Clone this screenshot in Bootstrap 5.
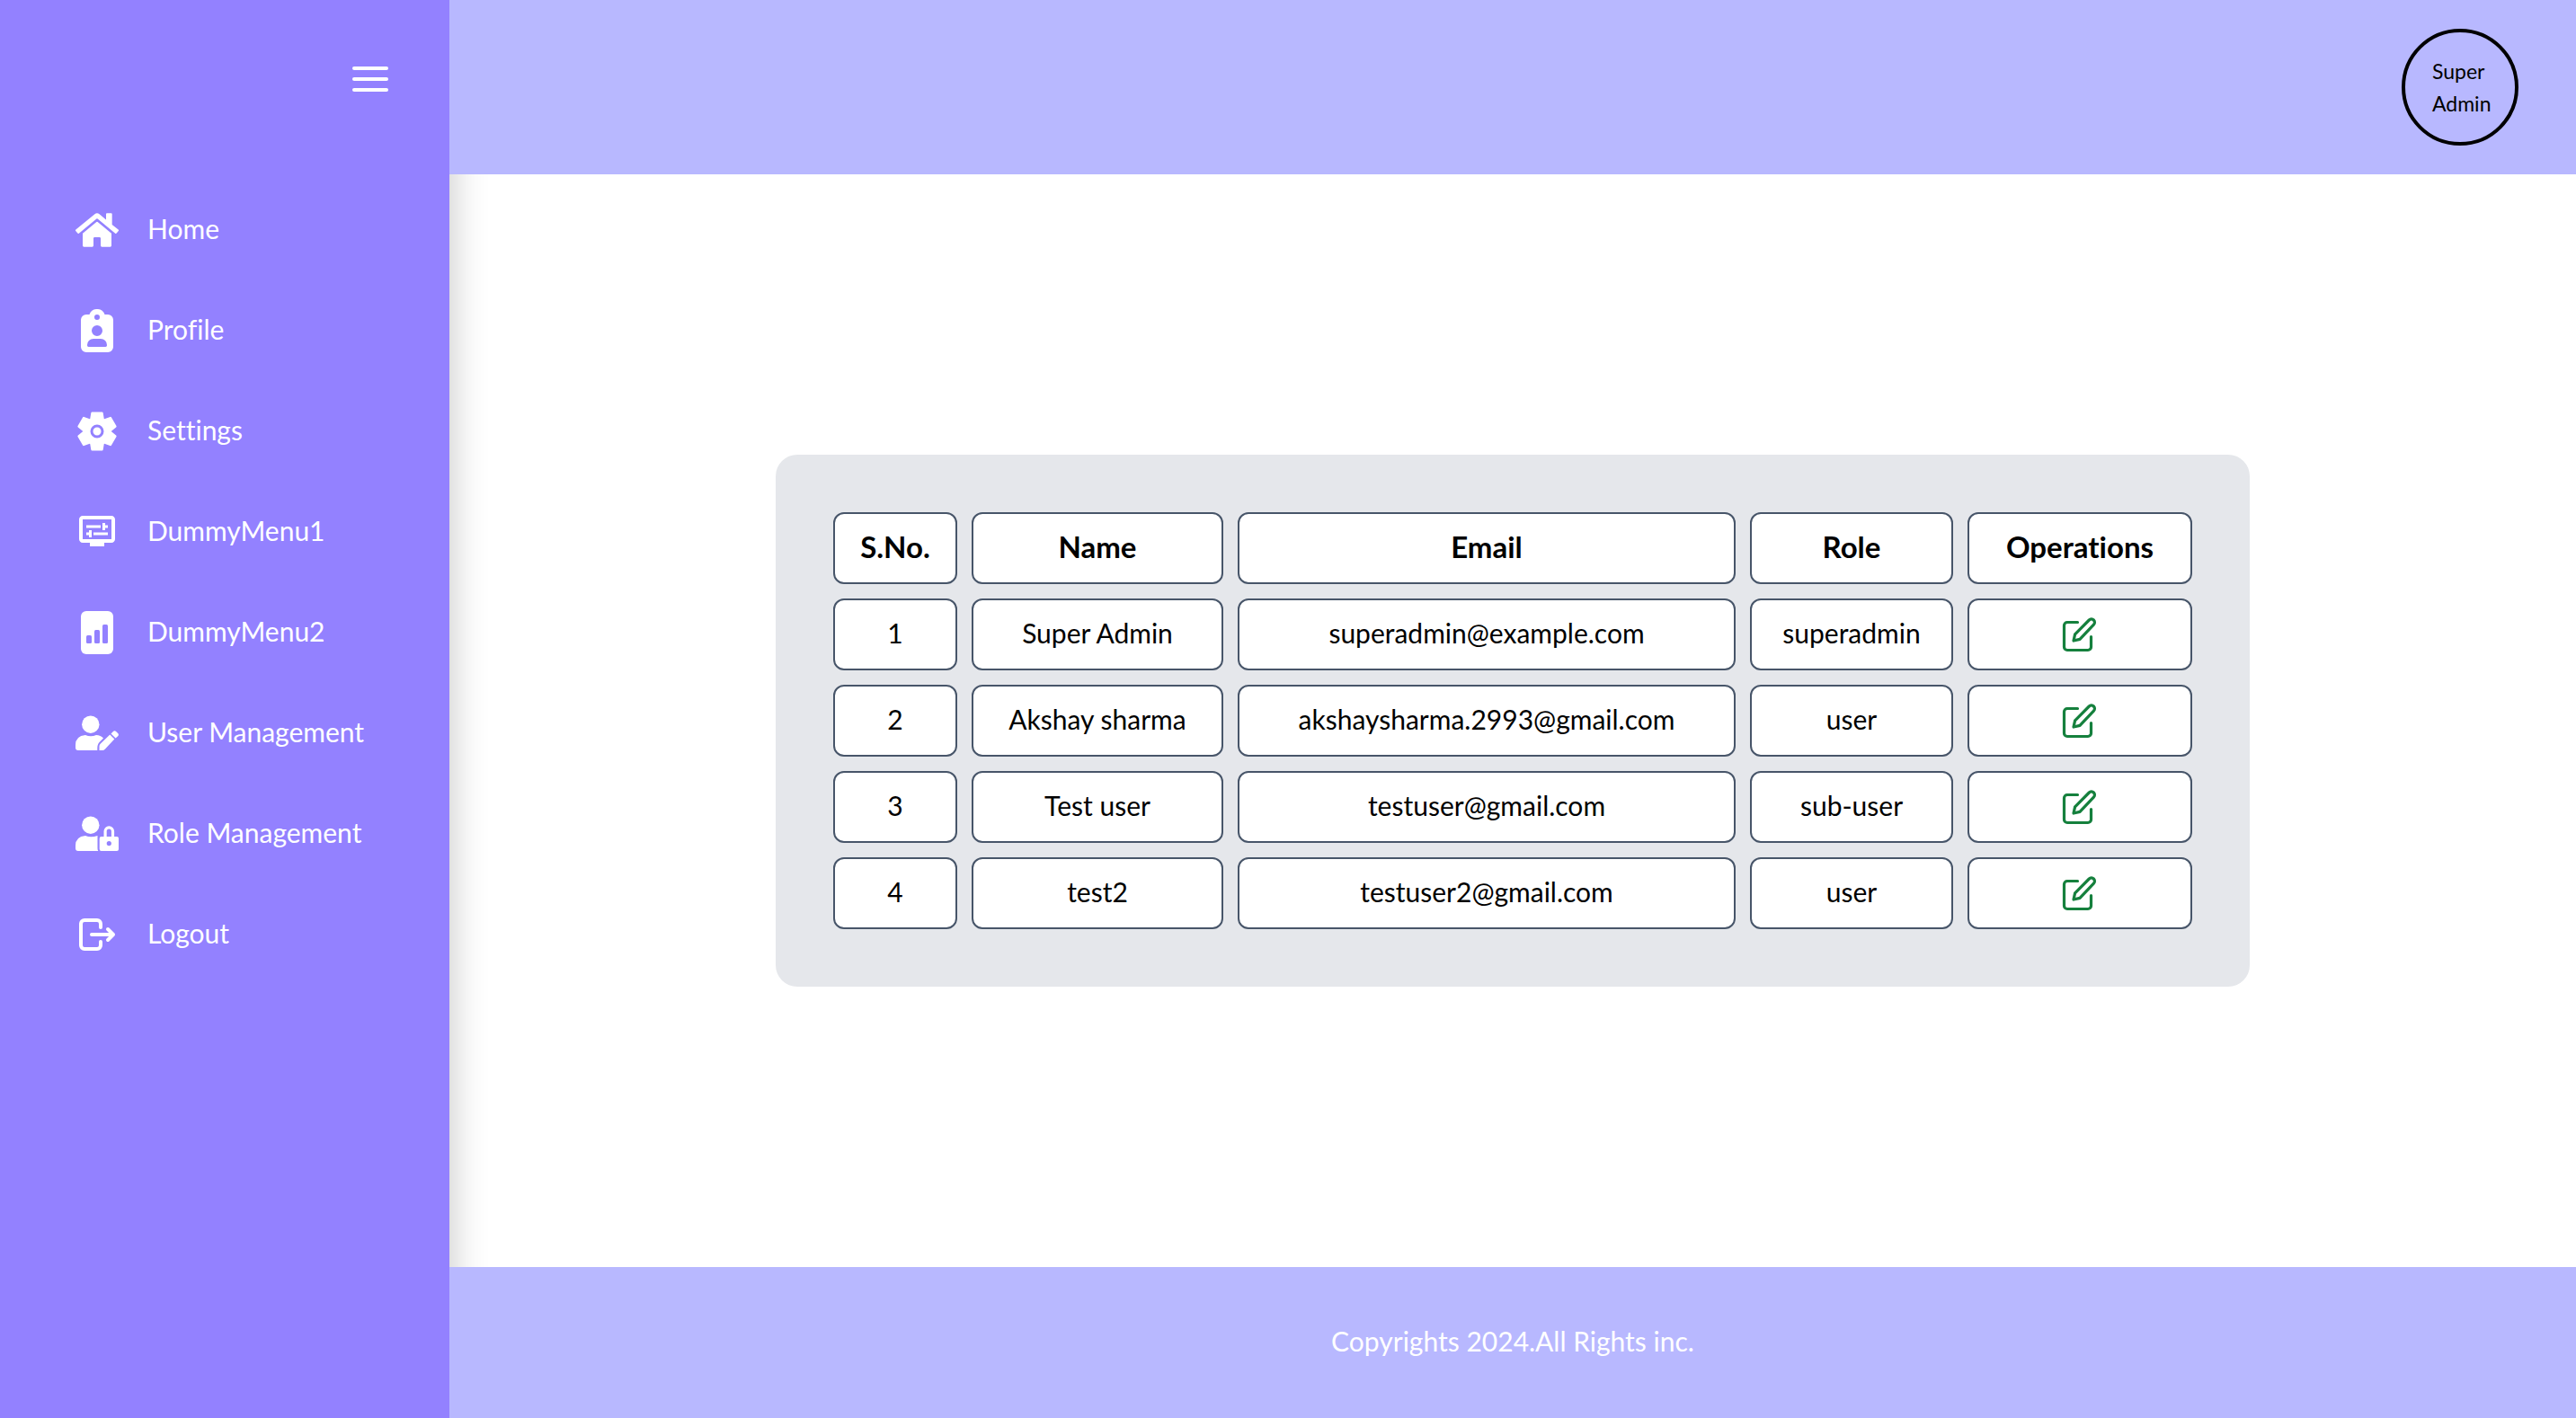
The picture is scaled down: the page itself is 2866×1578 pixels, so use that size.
<!DOCTYPE html>
<html lang="en">
<head>
<meta charset="utf-8">
<meta name="viewport" content="width=device-width, initial-scale=1">
<title>User Management</title>
<link href="https://cdn.jsdelivr.net/npm/bootstrap@5.3.0/dist/css/bootstrap.min.css" rel="stylesheet">
<style>
  body { font-family: Lato, "Open Sans", sans-serif; font-size: 30px; line-height: 48px; font-variant-ligatures: none; color: #000; background: #fff; }
  .side-panel { width: 500px; background: #9381ff; box-shadow: 0 0 40px rgba(0, 0, 0, .24); z-index: 1; }
  .side-top { height: 200px; padding: 64px 64px 0; }
  .side-link { gap: 32px; padding: 32px 84px; color: #fff; }
  .side-link:hover { color: #fff; background: #8570ff; }
  .side-link span { margin: -2px 0 2px; }
  .icon { width: 48px; height: 48px; flex: none; display: block; }
  .bar { background: #b8b8ff; z-index: 2; }
  .bar-top { padding: 32px 64px; }
  .bar-bottom { padding: 58px 64px 62px; color: #fff; }
  .avatar { width: 130px; height: 130px; border: 4px solid #000; font-size: 23px; line-height: 36px; padding: 0 30px; color: #000; }
  .panel { width: 100%; max-width: 1640px; padding: 48px; border-radius: 24px; background: #e5e7eb; }
  .users { width: 100%; table-layout: fixed; border-collapse: separate; border-spacing: 16px; }
  .users th, .users td { height: 80px; padding: 0 0 4px; border: 2px solid #475569; border-radius: 12px; background: #fff; text-align: center; vertical-align: middle; }
  .users th { font-size: 33px; }
  .users td:last-child { padding: 0; }
  .col-no { width: 138px; }
  .col-name { width: 280px; }
  .col-email { width: 554px; }
  .col-role { width: 226px; }
  .col-ops { width: 250px; }
  .edit { color: #15803d; }
  .edit svg { width: 40px; height: 40px; display: block; }
</style>
<script src="https://cdn.jsdelivr.net/npm/bootstrap@5.3.0/dist/js/bootstrap.bundle.min.js" defer></script>
</head>
<body>
<svg class="d-none" aria-hidden="true">
  <symbol id="edit" viewBox="0 0 40 40">
    <g fill="none" stroke="currentColor" stroke-width="3.2" stroke-linecap="round" stroke-linejoin="round">
      <path d="M17.500 6.500H6a3.500 3.500 0 0 0-3.500 3.500v24A3.500 3.500 0 0 0 6 37.500h23a3.500 3.500 0 0 0 3.500-3.500V22.500"/>
      <path d="M13 27l1.600-7.200L30.300 4a3.600 3.600 0 0 1 5.100 5.100L20 25.400z"/>
    </g>
  </symbol>
  <symbol id="person" viewBox="0 0 48 48">
    <circle cx="16.800" cy="14.200" r="9.700"/>
  </symbol>
</svg>

<div class="d-flex min-vh-100">
  <aside class="side-panel position-relative flex-shrink-0">
    <div class="side-top d-flex justify-content-end">
      <button type="button" class="btn p-0 border-0 text-white align-self-start" aria-label="Toggle menu">
        <svg class="icon" viewBox="0 0 48 48" fill="currentColor"><rect x="4" y="10" width="40" height="4" rx="2"/><rect x="4" y="22" width="40" height="4" rx="2"/><rect x="4" y="34" width="40" height="4" rx="2"/></svg>
      </button>
    </div>
    <nav class="d-flex flex-column" aria-label="Main">
      <a class="side-link d-flex align-items-center text-decoration-none" href="#">
        <svg class="icon" viewBox="0 0 576 512" fill="currentColor"><path d="M280.370 148.260L96 300.110V464a16 16 0 0 0 16 16l112.060-.290a16 16 0 0 0 15.920-16V368a16 16 0 0 1 16-16h64a16 16 0 0 1 16 16v95.640a16 16 0 0 0 16 16.050L464 480a16 16 0 0 0 16-16V300L295.670 148.260a12.190 12.190 0 0 0-15.300 0zM571.600 251.470L488 182.560V44.050a12 12 0 0 0-12-12h-56a12 12 0 0 0-12 12v72.610L318.470 43a48 48 0 0 0-61 0L4.340 251.470a12 12 0 0 0-1.600 16.900l25.500 31A12 12 0 0 0 45.150 301l235.220-193.740a12.190 12.190 0 0 1 15.300 0L530.900 301a12 12 0 0 0 16.900-1.600l25.500-31a12 12 0 0 0-1.700-16.930z"/></svg>
        <span>Home</span>
      </a>
      <a class="side-link d-flex align-items-center text-decoration-none" href="#">
        <svg class="icon" viewBox="0 0 48 48" fill="currentColor" fill-rule="evenodd"><path d="M12 6h3.500a9 9 0 0 1 17 0H36a6 6 0 0 1 6 6v30a6 6 0 0 1-6 6H12a6 6 0 0 1-6-6V12a6 6 0 0 1 6-6zM24 6a3 3 0 1 0 0 6a3 3 0 1 0 0-6zM24 18a6 6 0 1 0 0 12a6 6 0 1 0 0-12zM20 33a7 7 0 0 0-7 7.200q0 1.800 1.500 1.800h19q1.500 0 1.500-1.800A7 7 0 0 0 28 33z"/></svg>
        <span>Profile</span>
      </a>
      <a class="side-link d-flex align-items-center text-decoration-none" href="#">
        <svg class="icon" viewBox="0 0 48 48" fill="currentColor"><g stroke="currentColor" stroke-width="2.400" stroke-linejoin="round"><path id="tooth" d="M18.500 3.600h11l1.200 7.400L34 14v20l-3.300 3-1.200 7.400h-11L17.300 37 14 34V14l3.300-3z"/><use href="#tooth" transform="rotate(60 24 24)"/><use href="#tooth" transform="rotate(120 24 24)"/></g><circle cx="24" cy="24" r="6" fill="none" stroke="#9381ff" stroke-width="3"/></svg>
        <span>Settings</span>
      </a>
      <a class="side-link d-flex align-items-center text-decoration-none" href="#">
        <svg class="icon" viewBox="0 0 24 24" fill="currentColor"><path d="M20 3H4c-1.100 0-2 .9-2 2v11c0 1.100.9 2 2 2h4v2h8v-2h4c1.100 0 2-.9 2-2V5c0-1.100-.9-2-2-2zm0 13H4V5h16v11z"/><path d="M6 8.250h8v1.500H6zM16.500 9.750H18v-1.500h-1.500V7H15v4h1.500zM10 12.250h8v1.500h-8zM7.500 15H9v-4H7.500v1.250H6v1.500h1.500z"/></svg>
        <span>DummyMenu1</span>
      </a>
      <a class="side-link d-flex align-items-center text-decoration-none" href="#">
        <svg class="icon" viewBox="0 0 48 48"><rect x="6" width="36" height="48" rx="6" fill="currentColor"/><g fill="#9381ff"><rect x="12" y="27" width="6" height="9" rx="1.500"/><rect x="21" y="21" width="6" height="15" rx="1.500"/><rect x="30" y="15" width="6" height="21" rx="1.500"/></g></svg>
        <span>DummyMenu2</span>
      </a>
      <a class="side-link d-flex align-items-center text-decoration-none" href="#">
        <svg class="icon" viewBox="0 0 48 48" fill="currentColor"><use href="#person"/><path d="M11 26q6 2.400 12 0q5 0 8 3.500l-4.500 4.500q-2.500 2.500-2.200 9H3q-3 0-3-3v-3q0-10 11-11z"/><path d="M26.500 43v-4.500q0-1.600 1.200-2.800L38.300 25.600l5 5L33 41.500Q31.500 43 30 43zM39.500 24.500l2.700-2.800q1.300-1 2.600 0l2.600 2.600q1 1.300 0 2.600l-2.800 2.700z"/></svg>
        <span>User Management</span>
      </a>
      <a class="side-link d-flex align-items-center text-decoration-none" href="#">
        <svg class="icon" viewBox="0 0 48 48" fill="currentColor"><use href="#person"/><path d="M11 26q6 2.400 13.500 0V40q0 2 .8 3H3q-3 0-3-3v-3q0-10 11-11z"/><path fill-rule="evenodd" d="M31.500 27v-6a5.800 5.800 0 0 1 11.600 0v6H46q2 0 2 2v12q0 2-2 2H28.700q-2 0-2-2V29q0-2 2-2zM34.700 27h5.200v-6a2.600 2.600 0 0 0-5.200 0zM37.300 32a2.600 2.600 0 1 0 0 5.200a2.600 2.600 0 1 0 0-5.200z"/></svg>
        <span>Role Management</span>
      </a>
      <a class="side-link d-flex align-items-center text-decoration-none" href="#">
        <svg class="icon" viewBox="0 0 48 48" fill="none" stroke="currentColor" stroke-width="4" stroke-linecap="round" stroke-linejoin="round"><path d="M28 16v-4a4 4 0 0 0-4-4H10a4 4 0 0 0-4 4v24a4 4 0 0 0 4 4h14a4 4 0 0 0 4-4v-4M18 24h24M36 18l6 6-6 6"/></svg>
        <span>Logout</span>
      </a>
    </nav>
  </aside>

  <div class="d-flex flex-column flex-grow-1">
    <header class="bar bar-top position-relative d-flex justify-content-end">
      <button type="button" class="avatar rounded-circle bg-transparent text-start">Super Admin</button>
    </header>
    <main class="flex-grow-1 d-flex align-items-center justify-content-center">
      <div class="panel">
        <table class="users">
          <colgroup><col class="col-no"><col class="col-name"><col class="col-email"><col class="col-role"><col class="col-ops"></colgroup>
          <thead>
            <tr><th scope="col">S.No.</th><th scope="col">Name</th><th scope="col">Email</th><th scope="col">Role</th><th scope="col">Operations</th></tr>
          </thead>
          <tbody>
            <tr><td>1</td><td>Super Admin</td><td>superadmin@example.com</td><td>superadmin</td><td><button type="button" class="btn p-0 border-0 d-block mx-auto edit" aria-label="Edit Super Admin"><svg><use href="#edit"/></svg></button></td></tr>
            <tr><td>2</td><td>Akshay sharma</td><td>akshaysharma.2993@gmail.com</td><td>user</td><td><button type="button" class="btn p-0 border-0 d-block mx-auto edit" aria-label="Edit Akshay sharma"><svg><use href="#edit"/></svg></button></td></tr>
            <tr><td>3</td><td>Test user</td><td>testuser@gmail.com</td><td>sub-user</td><td><button type="button" class="btn p-0 border-0 d-block mx-auto edit" aria-label="Edit Test user"><svg><use href="#edit"/></svg></button></td></tr>
            <tr><td>4</td><td>test2</td><td>testuser2@gmail.com</td><td>user</td><td><button type="button" class="btn p-0 border-0 d-block mx-auto edit" aria-label="Edit test2"><svg><use href="#edit"/></svg></button></td></tr>
          </tbody>
        </table>
      </div>
    </main>
    <footer class="bar bar-bottom position-relative text-center">Copyrights 2024.All Rights inc.</footer>
  </div>
</div>
</body>
</html>
